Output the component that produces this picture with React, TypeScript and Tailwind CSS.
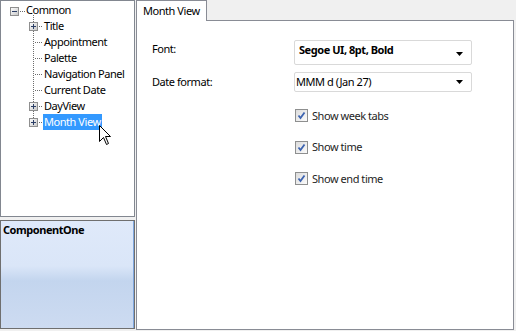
import React from "react";

const dotsH = (x1: number, x2: number, y: number) => {
  const r: React.ReactElement[] = [];
  for (let x = x1; x <= x2; x += 2) r.push(<rect key={`h${x}-${y}`} x={x} y={y} width={1} height={1} fill="#6d6d6d" />);
  return r;
};
const dotsV = (x: number, y1: number, y2: number) => {
  const r: React.ReactElement[] = [];
  for (let y = y1; y <= y2; y += 2) r.push(<rect key={`v${x}-${y}`} x={x} y={y} width={1} height={1} fill="#6d6d6d" />);
  return r;
};

const Box = ({ x, y, plus }: { x: number; y: number; plus: boolean }) => (
  <g>
    <defs>
      <linearGradient id="bx" x1="0" y1="0" x2="1" y2="1">
        <stop offset="0" stopColor="#ffffff" />
        <stop offset="1" stopColor="#c6c6c6" />
      </linearGradient>
    </defs>
    <rect x={x + 0.5} y={y + 0.5} width={8} height={8} fill="url(#bx)" stroke="#8f8f8f" />
    <rect x={x + 2} y={y + 4} width={5} height={1} fill="#2b3e66" />
    {plus && <rect x={x + 4} y={y + 2} width={1} height={5} fill="#2b3e66" />}
  </g>
);

const TreeLines = () => (
  <svg className="absolute left-[-1px] top-[-1px]" width={134} height={216}>
    <Box x={10} y={7} plus={false} />
    {dotsH(20, 24, 11)}
    {dotsV(33, 15, 21)}
    {dotsV(33, 31, 121)}
    <Box x={29} y={22} plus />
    {dotsH(39, 42, 26)}
    {[42, 58, 74, 90].map((y) => dotsH(35, 42, y))}
    <Box x={29} y={102} plus />
    {dotsH(39, 42, 106)}
    <Box x={29} y={118} plus />
    {dotsH(39, 42, 122)}
  </svg>
);

const Cursor = () => (
  <svg className="absolute left-[97px] top-[123px]" width={14} height={22} viewBox="0 0 14 22">
    <path d="M1.5 1.5 L1.5 17.5 L5.5 13.5 L8.5 20.5 L10.5 19.5 L7.5 12.5 L12.5 12.5 Z" fill="#ffffff" stroke="#000000" strokeWidth={1} strokeLinejoin="miter" />
  </svg>
);

const Check = ({ label }: { label: string }) => (
  <div className="flex items-center h-[13px]">
    <div className="w-[13px] h-[13px] border border-[#8e8f8f] bg-gradient-to-br from-[#dcdcdc] to-[#fbfbfb] flex items-center justify-center">
      <svg width={11} height={11} viewBox="0 0 11 11">
        <path d="M2.5 5.5 L4.5 8 L8.5 2.5" fill="none" stroke="#3c63b0" strokeWidth={1.8} />
      </svg>
    </div>
    <span className="ml-[4px] text-[#1e1e1e]">{label}</span>
  </div>
);

const Arrow = () => (
  <svg width={7} height={4} viewBox="0 0 7 4">
    <path d="M0 0 L7 0 L3.5 4 Z" fill="#000" />
  </svg>
);

export default function App() {
  const rows = ["Title", "Appointment", "Palette", "Navigation Panel", "Current Date", "DayView"];
  return (
    <div className="w-[516px] h-[331px] bg-[#f0f0f0] flex font-['Noto_Sans',sans-serif] text-[11px] leading-[16px] tracking-[-0.45px] text-black">
      <div className="w-[135px] flex flex-col">
        <div className="h-[217px] bg-white border border-[#828790] relative pt-[1px]">
          <TreeLines />
          <div className="h-[16px] pl-[25px] flex items-center">Common</div>
          {rows.map((r) => (
            <div key={r} className="h-[16px] pl-[43px] flex items-center">{r}</div>
          ))}
          <div className="h-[16px] pl-[42px] flex items-center">
            <span className="bg-[#3399ff] text-white px-[1px] h-[16px] flex items-center">Month View</span>
          </div>
          <Cursor />
        </div>
        <div className="mt-[3px] h-[109px] border border-[#6f6f6f] shadow-[inset_-1px_0_0_#80a7de] bg-[linear-gradient(180deg,#dfe9fa_0%,#dae6f8_42%,#c3d5ee_56%,#cddbf1_100%)] pl-[2px] pt-[1px]">
          <span className="font-bold">ComponentOne</span>
        </div>
      </div>
      <div className="ml-[1px] w-[378px] flex flex-col pb-[1px]">
        <div className="h-[21px] flex shrink-0">
          <div className="w-[71px] h-[21px] bg-white border border-b-0 border-[#898c95] pl-[6px] flex items-center relative z-10">
            Month View
          </div>
          <div className="flex-1 border-b border-[#898c95]" />
        </div>
        <div className="flex-1 bg-white border border-t-0 border-[#898c95] pl-[15px] pt-[19px]">
          <div className="flex items-start h-[25px]">
            <div className="w-[142px] pt-[1px]">Font:</div>
            <div className="w-[178px] h-[25px] border border-[#d9d9d9] rounded-[2px] flex justify-between pl-[4px] pr-[8px]">
              <span className="font-bold pt-[1px]">Segoe UI, 8pt, Bold</span>
              <div className="pt-[11px]"><Arrow /></div>
            </div>
          </div>
          <div className="flex items-center h-[20px] mt-[7px]">
            <div className="w-[142px]">Date format:</div>
            <div className="w-[178px] h-[20px] border border-[#d9d9d9] rounded-[2px] flex items-center justify-between pl-[1px] pr-[8px]">
              <span>MMM d (Jan 27)</span>
              <Arrow />
            </div>
          </div>
          <div className="pl-[143px] pt-[17px] flex flex-col gap-[18.5px]">
            <Check label="Show week tabs" />
            <Check label="Show time" />
            <Check label="Show end time" />
          </div>
        </div>
      </div>
    </div>
  );
}
